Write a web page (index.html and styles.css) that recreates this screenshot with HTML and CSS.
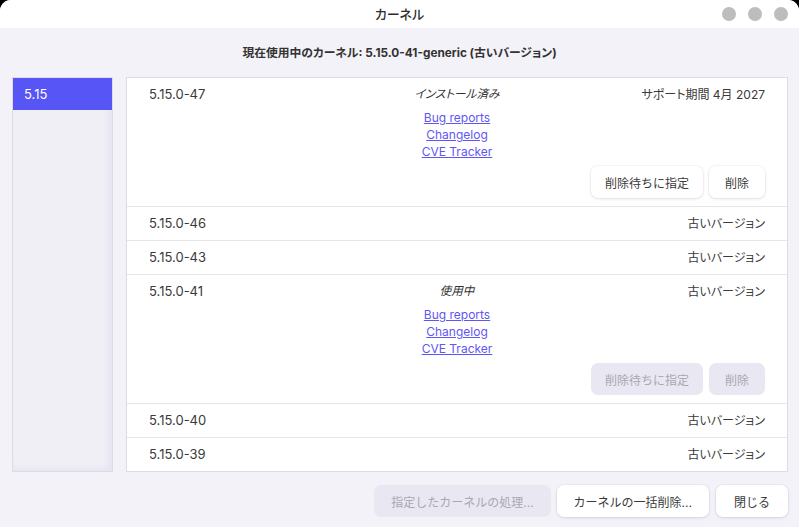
FILE: index.html
```html
<!DOCTYPE html>
<html lang="ja">
<head>
<meta charset="utf-8">
<title>カーネル</title>
<link rel="stylesheet" href="styles.css">
</head>
<body>
<div class="window">
  <header class="titlebar">
    <div></div>
    <div class="title">カーネル</div>
    <div class="controls"><span class="dot"></span><span class="dot"></span><span class="dot"></span></div>
  </header>
  <div class="current">現在使用中のカーネル: 5.15.0-41-generic (古いバージョン)</div>
  <main class="main">
    <nav class="sidebar">
      <div class="side-item active">5.15</div>
    </nav>
    <section class="list">
      <div class="row expanded">
        <div class="row-head">
          <span class="ver">5.15.0-47</span>
          <span class="status">インストール済み</span>
          <span class="support">サポート期間 4月 2027</span>
        </div>
        <div class="links">
          <a href="#">Bug reports</a>
          <a href="#">Changelog</a>
          <a href="#">CVE Tracker</a>
        </div>
        <div class="actions">
          <button class="btn">削除待ちに指定</button>
          <button class="btn small">削除</button>
        </div>
      </div>
      <div class="row">
        <div class="row-head"><span class="ver">5.15.0-46</span><span class="status"></span><span class="support">古いバージョン</span></div>
      </div>
      <div class="row">
        <div class="row-head"><span class="ver">5.15.0-43</span><span class="status"></span><span class="support">古いバージョン</span></div>
      </div>
      <div class="row expanded">
        <div class="row-head">
          <span class="ver">5.15.0-41</span>
          <span class="status">使用中</span>
          <span class="support">古いバージョン</span>
        </div>
        <div class="links">
          <a href="#">Bug reports</a>
          <a href="#">Changelog</a>
          <a href="#">CVE Tracker</a>
        </div>
        <div class="actions">
          <button class="btn" disabled>削除待ちに指定</button>
          <button class="btn small" disabled>削除</button>
        </div>
      </div>
      <div class="row">
        <div class="row-head"><span class="ver">5.15.0-40</span><span class="status"></span><span class="support">古いバージョン</span></div>
      </div>
      <div class="row">
        <div class="row-head"><span class="ver">5.15.0-39</span><span class="status"></span><span class="support">古いバージョン</span></div>
      </div>
    </section>
  </main>
  <footer class="footer">
    <button class="btn wide" disabled>指定したカーネルの処理...</button>
    <button class="btn wide">カーネルの一括削除...</button>
    <button class="btn wide">閉じる</button>
  </footer>
</div>
</body>
</html>
```

FILE: styles.css
```css
* { box-sizing: border-box; }
html, body { margin: 0; padding: 0; background: #000; }
body {
  font-family: Inter, "Noto Sans CJK JP", sans-serif;
  font-size: 13px;
  color: #3a3a3a;
}
.window {
  width: 799px;
  height: 527px;
  background: #f3f2f8;
  border-radius: 11px 11px 0 0;
  overflow: hidden;
  display: flex;
  flex-direction: column;
}
.titlebar {
  height: 28px;
  background: #fff;
  display: grid;
  grid-template-columns: 1fr auto 1fr;
  align-items: center;
}
.title {
  font-size: 13px;
  font-weight: 500;
  color: #2e2e2e;
  padding-bottom: 1px;
  font-feature-settings: "palt";
}
.controls {
  justify-self: end;
  display: flex;
  gap: 12px;
  padding-right: 11px;
}
.dot {
  width: 14px;
  height: 14px;
  border-radius: 50%;
  background: #bdbdbd;
}
.current {
  height: 49px;
  display: flex;
  align-items: center;
  justify-content: center;
  padding-bottom: 3px;
  font-size: 11.8px;
  font-weight: 700;
  color: #333;
  font-feature-settings: "palt";
}
.main {
  display: flex;
  gap: 13px;
  padding: 0 11px 0 12px;
  height: 395px;
}
.sidebar {
  width: 101px;
  border: 1px solid #dddce6;
  background: #f0eff6;
  box-shadow: inset -4px -3px 6px rgba(80, 70, 140, 0.06);
}
.side-item {
  height: 32px;
  padding-left: 11px;
  display: flex;
  align-items: center;
  font-size: 13px;
}
.side-item.active {
  background: #5855f6;
  color: #fff;
}
.list {
  flex: 1;
  background: #fff;
  border: 1px solid #dddce4;
}
.row {
  padding: 8px 22px;
  border-bottom: 1px solid #e6e5ec;
}
.row:last-child { border-bottom: none; }
.row-head {
  display: grid;
  grid-template-columns: 1fr auto 1fr;
  line-height: 17px;
  height: 17px;
  font-feature-settings: "palt";
}
.status {
  font-style: italic;
  font-size: 11.6px;
  color: #333;
}
.support {
  text-align: right;
  font-size: 12px;
}
.links {
  margin-top: 6px;
  display: flex;
  flex-direction: column;
  align-items: center;
  line-height: 17px;
  font-size: 12px;
}
.links a {
  color: #5f57f2;
  text-decoration: underline;
}
.actions {
  margin-top: 6px;
  display: flex;
  justify-content: flex-end;
  gap: 6px;
}
.btn {
  font-family: Inter, "Noto Sans CJK JP", sans-serif;
  font-size: 12px;
  color: #3a3a3a;
  height: 32px;
  padding: 0 14px;
  min-width: 56px;
  background: #fff;
  border: none;
  border-radius: 7px;
  box-shadow: 0 1px 3px rgba(40, 30, 90, 0.12), 0 0 0 1px rgba(40, 30, 90, 0.03);
}
.btn:disabled {
  background: #e8e7f2;
  color: #a9a8b3;
  box-shadow: none;
}
.footer {
  display: flex;
  justify-content: flex-end;
  gap: 6px;
  padding: 13px 11px 0 0;
}
.btn.wide { padding: 0 17px; }
.footer .btn:last-child { margin-left: 1px; padding: 0 18px; }
```
